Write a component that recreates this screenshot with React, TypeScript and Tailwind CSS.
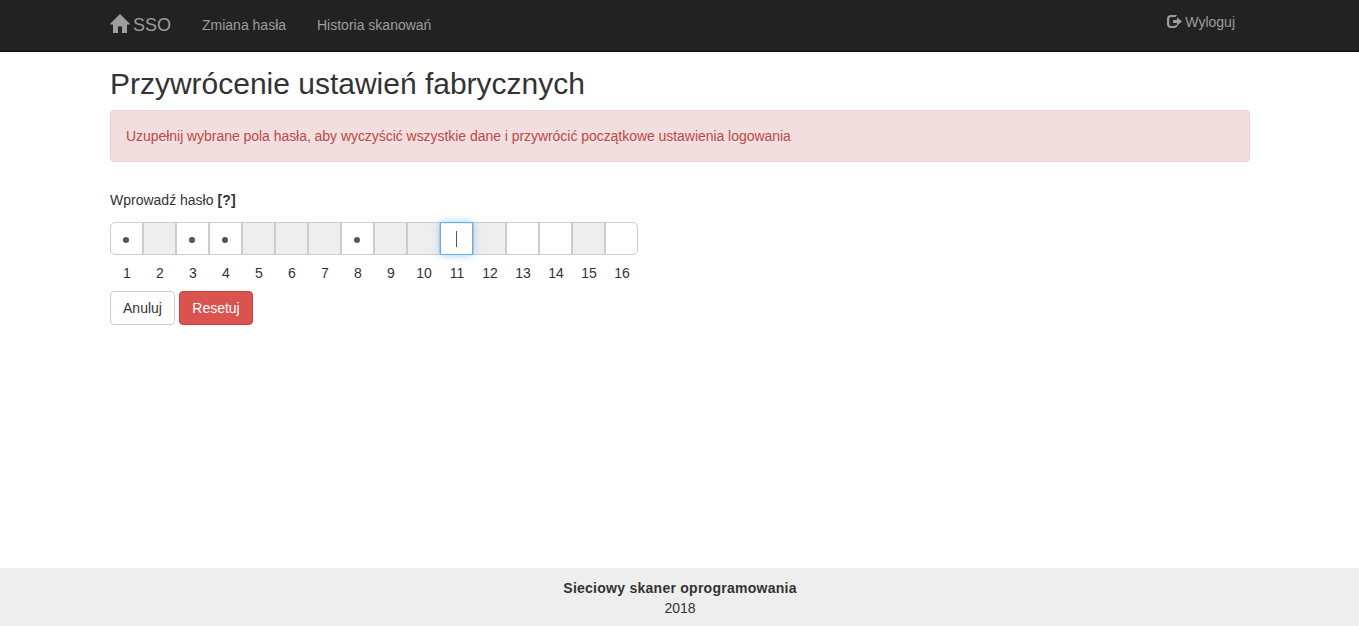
type CellState = 'filled' | 'disabled' | 'focused' | 'empty';

const cells: CellState[] = [
  'filled', 'disabled', 'filled', 'filled', 'disabled', 'disabled', 'disabled', 'filled',
  'disabled', 'disabled', 'focused', 'disabled', 'empty', 'empty', 'disabled', 'empty',
];

const cellStyles: Record<CellState, string> = {
  filled: 'border-[#ccc] bg-white',
  disabled: 'border-[#ccc] bg-[#eee]',
  focused:
    'relative z-10 border-[#66afe9] bg-white shadow-[inset_0_1px_1px_rgba(0,0,0,0.075),0_0_8px_rgba(102,175,233,0.6)]',
  empty: 'border-[#ccc] bg-white',
};

function HomeIcon() {
  return (
    <svg className="mt-[14px] h-[19px] w-5 shrink-0" viewBox="0 0 20 19" fill="currentColor" aria-hidden="true">
      <path d="M9.500 0.500 H10.500 L19.800 9.800 V10.500 H17 V19 H12 V12.500 H8 V19 H3 V10.500 H0.200 V9.800 Z" />
    </svg>
  );
}

function LogoutIcon() {
  return (
    <svg className="mt-[15px] h-[13px] w-[15px] shrink-0" viewBox="0 0 15 13" fill="currentColor" aria-hidden="true">
      <path d="M10 0 H4 A4 4 0 0 0 0 4 V9 A4 4 0 0 0 4 13 H7 A4 4 0 0 0 10.500 11 V9.500 L8.600 10.300 Q8 11 7 11 H4 Q2.200 11 2.200 9 V4 Q2.200 2 4 2 H8.500 Z" />
      <path d="M10 2.300 L15 6.500 L10 10.700 V8 H6 V5 H10 Z" />
    </svg>
  );
}

function PasswordCell({ state, index }: { state: CellState; index: number }) {
  const corners = index === 0 ? 'rounded-l-[5px]' : index === 15 ? 'rounded-r-[5px]' : '';
  return (
    <div className={`flex h-[33px] w-[33px] items-center justify-center border ${corners} ${cellStyles[state]}`}>
      {state === 'filled' && <span className="mr-px mt-[3px] size-[6px] rounded-full bg-[#555]" />}
      {state === 'focused' && <span className="h-4 w-px bg-[#555]" />}
    </div>
  );
}

export default function App() {
  return (
    <div className="flex h-screen flex-col bg-white font-['Liberation_Sans',Arial,sans-serif] text-[14px] leading-5 text-[#333]">
      <nav className="h-[52px] shrink-0 border-b border-[#080808] bg-[#222] text-[#9d9d9d]">
        <div className="flex pl-[110px] pr-[124px]">
          <a className="flex w-[92px]" href="#">
            <HomeIcon />
            <span className="ml-[3px] mt-[15px] text-[18px]">SSO</span>
          </a>
          <a className="mt-[15px] w-[115px]" href="#">Zmiana hasła</a>
          <a className="mt-[15px]" href="#">Historia skanowań</a>
          <a className="ml-auto flex" href="#">
            <LogoutIcon />
            <span className="ml-[3px] mt-3">Wyloguj</span>
          </a>
        </div>
      </nav>

      <main className="flex-1 pl-[110px] pr-[109px] pt-[15px]">
        <h1 className="text-[30px] leading-[33px] tracking-[-0.01px]">Przywrócenie ustawień fabrycznych</h1>
        <div className="mt-[10px] h-[52px] rounded border border-[#ebccd1] bg-[#f2dede] p-[15px] tracking-[-0.043px] text-[#b94a48]">
          Uzupełnij wybrane pola hasła, aby wyczyścić wszystkie dane i przywrócić początkowe ustawienia logowania
        </div>
        <div className="mt-7">
          Wprowadź hasło <b className="tracking-[0.2px]">[?]</b>
        </div>
        <div className="mt-3 flex">
          {cells.map((state, i) => (
            <PasswordCell key={i} state={state} index={i} />
          ))}
        </div>
        <div className="mt-2 flex">
          {cells.map((_, i) => (
            <div key={i} className="w-[33px] pl-px text-center">{i + 1}</div>
          ))}
        </div>
        <div className="mt-2 flex gap-1">
          <button className="h-[34px] w-[65px] rounded border border-[#ccc] bg-white">Anuluj</button>
          <button className="h-[34px] w-[74px] rounded border border-[#d43f3a] bg-[#d9534f] text-white">Resetuj</button>
        </div>
      </main>

      <footer className="h-[58px] shrink-0 bg-[#eee] pl-px pt-[10px] text-center">
        <div className="font-bold tracking-[0.26px]">Sieciowy skaner oprogramowania</div>
        <div>2018</div>
      </footer>
    </div>
  );
}
